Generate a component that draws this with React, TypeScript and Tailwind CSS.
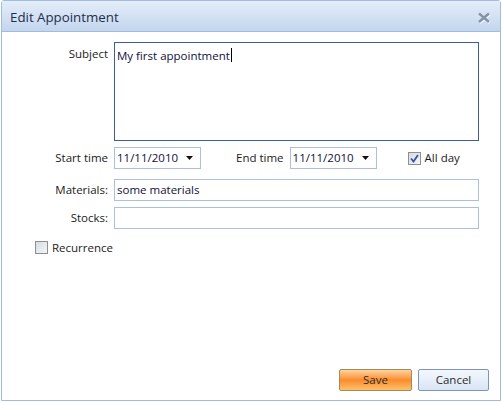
import React from "react"

const FONT = { fontFamily: '"Segoe UI", "Open Sans", "Noto Sans", sans-serif' }

function DateBox({ value }: { value: string }) {
  return (
    <div className="flex h-[22px] w-[87px] items-center justify-between border border-[#a9c0de] bg-white pl-[2px] pr-[6px] text-[#10103a]">
      <span>{value}</span>
      <svg width="8" height="5" viewBox="0 0 8 5">
        <path d="M0 0h7L3.5 4z" fill="#111" />
      </svg>
    </div>
  )
}

function CheckBox({ checked }: { checked?: boolean }) {
  return (
    <span className="flex h-[13px] w-[13px] items-center justify-center border border-[#8e8f8f] bg-gradient-to-br from-[#d8dce2] to-[#f4f6f8]">
      {checked && (
        <svg width="9" height="9" viewBox="0 0 9 9">
          <path d="M1 4.5 3.5 7.5 8 1" fill="none" stroke="#3552a8" strokeWidth="1.8" />
        </svg>
      )}
    </span>
  )
}

export default function App() {
  return (
    <div className="h-[402px] w-[502px] bg-white text-[11.5px] text-[#1b1b1b]" style={FONT}>
      <div className="ml-px flex h-[401px] w-[500px] flex-col rounded-t-[3px] border border-[#a3bcdb] bg-white">
        <div className="flex h-[31px] items-center justify-between border-b border-[#a3bcdb] bg-gradient-to-b from-[#e4edf9] to-[#c3d6ee] pl-[8px] pr-[9px] pt-[3px]">
          <span className="text-[13.3px] text-[#1e2f4a]">Edit Appointment</span>
          <svg width="14" height="12" viewBox="0 0 14 12">
            <path d="M2 1.5 12 10M12 1.5 2 10" stroke="#ffffff" strokeWidth="3.2" transform="translate(0.6 0.6)" />
            <path d="M2 1.5 12 10M12 1.5 2 10" stroke="#8293aa" strokeWidth="2.6" />
          </svg>
        </div>

        <div className="flex flex-1 flex-col pt-[10px]">
          <div className="flex gap-[6px]">
            <span className="w-[106px] pt-[3px] text-right">Subject</span>
            <div className="h-[99px] w-[365px] border border-[#3d5d9b] px-[2px] pt-[3px] leading-[15px] text-[#10103a]">
              My first appointment
              <span className="ml-px inline-block h-[14px] w-px translate-y-[2px] bg-black" />
            </div>
          </div>

          <div className="mt-[6px] flex h-[22px] items-center">
            <span className="w-[106px] text-right">Start time</span>
            <div className="ml-[6px]">
              <DateBox value="11/11/2010" />
            </div>
            <span className="ml-[35px]">End time</span>
            <div className="ml-[6px]">
              <DateBox value="11/11/2010" />
            </div>
            <div className="ml-[31px] flex items-center gap-[4px]">
              <CheckBox checked />
              <span>All day</span>
            </div>
          </div>

          <div className="mt-[10px] flex h-[22px] items-center gap-[6px]">
            <span className="w-[106px] text-right">Materials:</span>
            <div className="flex h-[22px] w-[365px] items-center border border-[#a9c0de] px-[2px] text-[#10103a]">
              some materials
            </div>
          </div>

          <div className="mt-[6px] flex h-[22px] items-center gap-[6px]">
            <span className="w-[106px] text-right">Stocks:</span>
            <div className="h-[22px] w-[365px] border border-[#a9c0de]" />
          </div>

          <div className="ml-[33px] mt-[10px] flex items-center gap-[4px]">
            <CheckBox />
            <span>Recurrence</span>
          </div>

          <div className="mt-auto flex justify-end gap-[6px] pb-[9px] pr-[11px]">
            <button className="h-[22px] w-[73px] rounded-[2px] border border-[#a08a60] bg-gradient-to-b from-[#ffd49a] via-[#f98c2a] to-[#ffc068] text-[11.5px] text-[#2b2b2b]">
              Save
            </button>
            <button className="h-[22px] w-[71px] rounded-[2px] border border-[#7d95be] bg-gradient-to-b from-[#f4f8fd] to-[#d9e5f4] text-[11.5px] text-[#2b2b2b]">
              Cancel
            </button>
          </div>
        </div>
      </div>
    </div>
  )
}
